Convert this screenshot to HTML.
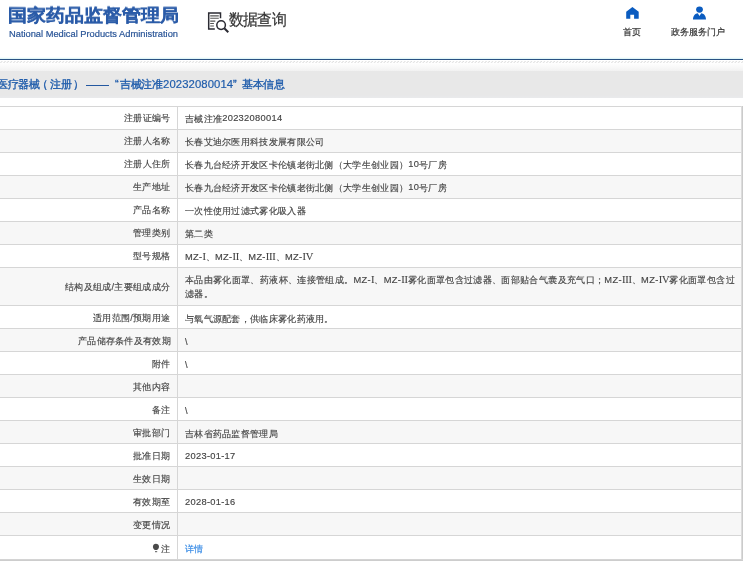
<!DOCTYPE html>
<html><head><meta charset="utf-8">
<style>
*{margin:0;padding:0;box-sizing:border-box}
html,body{width:743px;height:568px;overflow:hidden;background:#fff;font-family:"Liberation Sans",sans-serif;position:relative}
div,span,svg{position:absolute}
.logo-cn{left:8px;top:3px;font-size:19px;font-weight:bold;color:#2a5ba8;white-space:nowrap;line-height:24px;transform:scaleY(0.92);transform-origin:0 20px;-webkit-text-stroke:0.3px #2a5ba8}
.logo-en{left:9px;top:27.8px;font-size:9.3px;color:#2a5597;white-space:nowrap;line-height:12px;-webkit-text-stroke:0.2px #2a5597}
.dq{left:229px;top:9px;font-size:15px;letter-spacing:-0.8px;color:#333;white-space:nowrap;line-height:20px;transform:scaleY(1.07);transform-origin:0 0;-webkit-text-stroke:0.2px #333}
.dqi{left:204px;top:8px}
.nav1{left:622px;top:3px}
.nav1t{left:623px;top:24.5px;font-size:9px;color:#333;white-space:nowrap;line-height:14px;-webkit-text-stroke:0.2px #333}
.nav2{left:689px;top:3px}
.nav2t{left:671px;top:24.5px;font-size:9px;color:#333;white-space:nowrap;line-height:14px;-webkit-text-stroke:0.2px #333}
.bl{left:0;top:57px;width:743px;height:1px;background:#f6fdfd}
.bl1{left:0;top:58px;width:743px;height:1px;background:#e2f6f8}
.bl2{left:0;top:59px;width:743px;height:1px;background:#2a5283}
.hatch{left:0;top:61px;width:743px;height:2px}
.grad{left:0;top:63px;width:743px;height:8px;background:linear-gradient(#fff,#f2f2f2)}
.band{left:0;top:71px;width:743px;height:27px;background:linear-gradient(#e8e8e8 0,#e8e8e8 24px,#e9eaec 27px)}
.tt{top:77px;font-size:10.75px;color:#1f5cab;white-space:nowrap;line-height:14px;letter-spacing:-0.35px;-webkit-text-stroke:0.35px #1f5cab}
.dg{letter-spacing:0.1px;font-size:11.3px;-webkit-text-stroke:0.2px #1f5cab;top:76.5px}
.dash{left:85.5px;top:85px;width:23.5px;height:1px;background:#2458a0}
.row{left:0;width:743px}
.lab{right:572.5px;top:0;bottom:0;display:flex;align-items:center;font-size:9.3px;letter-spacing:0.3px;color:#444;white-space:nowrap;padding-top:2px;-webkit-text-stroke:0.15px #444;will-change:transform}
.val{left:185px;right:0;top:0;bottom:0;display:flex;align-items:center;font-size:9.3px;letter-spacing:0.3px;color:#444;line-height:14px;padding-top:2px;white-space:nowrap;-webkit-text-stroke:0.15px #444;will-change:transform}
.hl{left:0;width:743px;height:1px;background:#d6d6d6}
.vl{left:177px;top:106px;width:1px;height:453px;background:#d6d6d6}
.rb{left:741px;top:106px;width:2px;height:455px;background:linear-gradient(90deg,#dcdcdc 0,#dcdcdc 1px,#cbcbcb 1px)}
.bb{left:0;top:559px;width:743px;height:2px;background:linear-gradient(#d4d4d4 0,#d4d4d4 1px,#cdcdcd 1px)}
.link{position:static;color:#3b8de6;-webkit-text-stroke:0.2px #3b8de6}
.pin{position:relative;display:inline-block;width:7px;height:8px;margin-right:1px}

.logo-cn,.logo-en,.dq,.nav1t,.nav2t,.tt{will-change:transform}
.rn{position:static;font-family:"Liberation Serif",serif;font-size:10.5px;letter-spacing:-0.2px;-webkit-text-stroke:0.1px #444}
.d{position:relative;top:-0.7px}
.d .rn{position:static}

</style></head><body>
<div class="logo-cn">国家药品监督管理局</div>
<div class="logo-en">National Medical Products Administration</div>
<svg class="dqi" width="28" height="28" viewBox="0 0 28 28">
  <path d="M10.8 20.9H4.7V4.9H16.5V10.3" fill="none" stroke="#2b2b33" stroke-width="1.5"/>
  <path d="M6.2 7.9h8.6M6.2 10.3h8.6M6.2 13.1h5.1M6.2 15.5h3.7M6.2 18h3.7" stroke="#555" stroke-width="1.1"/>
  <circle cx="17.1" cy="17.1" r="4.3" fill="none" stroke="#2b2b33" stroke-width="1.5"/>
  <path d="M20.3 20.3L24.3 24.3" stroke="#2b2b33" stroke-width="2"/>
</svg>
<div class="dq">数据查询</div>
<svg class="nav1" width="22" height="20" viewBox="0 0 22 20">
  <path d="M10.4 3.9L16.7 8.8V15.7H12.1V11.8H8.3V15.7H4.2V8.8Z" fill="#0b5cc0"/>
</svg>
<div class="nav1t">首页</div>
<svg class="nav2" width="22" height="20" viewBox="0 0 22 20">
  <ellipse cx="10.5" cy="6.6" rx="3.4" ry="3.1" fill="#0b5cc0"/>
  <path d="M4 16.5C4 12.6 6.3 10.4 8.8 10.2L10.5 13L12.2 10.2C14.7 10.4 17 12.6 17 16.5Z" fill="#0b5cc0"/>
</svg>
<div class="nav2t">政务服务门户</div>
<div class="bl"></div><div class="bl1"></div><div class="bl2"></div>
<svg class="hatch" width="743" height="2"><defs><pattern id="hp" patternUnits="userSpaceOnUse" width="3.25" height="2"><path d="M0.3 2L2.3 0" stroke="#d9d9d9" stroke-width="0.9"/></pattern></defs><rect width="743" height="2" fill="url(#hp)"/></svg>
<div class="grad"></div>
<div class="band"></div>
<div class="tt" style="left:-3.2px">医疗器械</div>
<div class="tt" style="left:37px">（</div>
<div class="tt" style="left:49.5px">注册</div>
<div class="tt" style="left:73px">）</div>
<div class="dash"></div>
<div class="tt" style="left:114.5px">“</div>
<div class="tt" style="left:119.5px">吉械注准</div>
<div class="tt dg" style="left:162.5px">20232080014</div>
<div class="tt" style="left:232.5px">”</div>
<div class="tt" style="left:241.5px">基本信息</div>

<div class="row" style="top:106px;height:23px;background:#fff"><div class="lab"><p>注册证编号</p></div><div class="val"><p>吉械注准<span class=d>20232080014</span></p></div></div>
<div class="row" style="top:129px;height:23px;background:#f7f7f7"><div class="lab"><p>注册人名称</p></div><div class="val"><p>长春艾迪尔医用科技发展有限公司</p></div></div>
<div class="row" style="top:152px;height:23px;background:#fff"><div class="lab"><p>注册人住所</p></div><div class="val"><p>长春九台经济开发区卡伦镇老街北侧（大学生创业园）<span class=d>10</span>号厂房</p></div></div>
<div class="row" style="top:175px;height:23px;background:#f7f7f7"><div class="lab"><p>生产地址</p></div><div class="val"><p>长春九台经济开发区卡伦镇老街北侧（大学生创业园）<span class=d>10</span>号厂房</p></div></div>
<div class="row" style="top:198px;height:23px;background:#fff"><div class="lab"><p>产品名称</p></div><div class="val"><p>一次性使用过滤式雾化吸入器</p></div></div>
<div class="row" style="top:221px;height:23px;background:#f7f7f7"><div class="lab"><p>管理类别</p></div><div class="val"><p>第二类</p></div></div>
<div class="row" style="top:244px;height:23px;background:#fff"><div class="lab"><p>型号规格</p></div><div class="val"><p>MZ-<span class=rn>I</span>、MZ-<span class=rn>II</span>、MZ-<span class=rn>III</span>、MZ-<span class=rn>IV</span></p></div></div>
<div class="row" style="top:267px;height:38px;background:#f7f7f7"><div class="lab"><p>结构及组成/主要组成成分</p></div><div class="val" style="letter-spacing:0.355px"><p>本品由雾化面罩、药液杯、连接管组成。MZ-<span class=rn>I</span>、MZ-<span class=rn>II</span>雾化面罩包含过滤器、面部贴合气囊及充气口；MZ-<span class=rn>III</span>、MZ-<span class=rn>IV</span>雾化面罩包含过<br>滤器。</p></div></div>
<div class="row" style="top:305px;height:23px;background:#fff"><div class="lab" style="padding-top:4px"><p>适用范围/预期用途</p></div><div class="val" style="padding-top:4px"><p>与氧气源配套，供临床雾化药液用。</p></div></div>
<div class="row" style="top:328px;height:23px;background:#f7f7f7"><div class="lab" style="padding-top:4px"><p>产品储存条件及有效期</p></div><div class="val" style="padding-top:4px"><p>\</p></div></div>
<div class="row" style="top:351px;height:23px;background:#fff"><div class="lab" style="padding-top:4px"><p>附件</p></div><div class="val" style="padding-top:4px"><p>\</p></div></div>
<div class="row" style="top:374px;height:23px;background:#f7f7f7"><div class="lab" style="padding-top:4px"><p>其他内容</p></div><div class="val" style="padding-top:4px"><p></p></div></div>
<div class="row" style="top:397px;height:23px;background:#fff"><div class="lab" style="padding-top:4px"><p>备注</p></div><div class="val" style="padding-top:4px"><p>\</p></div></div>
<div class="row" style="top:420px;height:23px;background:#f7f7f7"><div class="lab" style="padding-top:4px"><p>审批部门</p></div><div class="val" style="padding-top:4px"><p>吉林省药品监督管理局</p></div></div>
<div class="row" style="top:443px;height:23px;background:#fff"><div class="lab" style="padding-top:4px"><p>批准日期</p></div><div class="val" style="padding-top:4px"><p><span class=d>2023-01-17</span></p></div></div>
<div class="row" style="top:466px;height:23px;background:#f7f7f7"><div class="lab" style="padding-top:4px"><p>生效日期</p></div><div class="val" style="padding-top:4px"><p></p></div></div>
<div class="row" style="top:489px;height:23px;background:#fff"><div class="lab" style="padding-top:4px"><p>有效期至</p></div><div class="val" style="padding-top:4px"><p><span class=d>2028-01-16</span></p></div></div>
<div class="row" style="top:512px;height:23px;background:#f7f7f7"><div class="lab" style="padding-top:4px"><p>变更情况</p></div><div class="val" style="padding-top:4px"><p></p></div></div>
<div class="row" style="top:535px;height:24px;background:#fff"><div class="lab" style="padding-top:4px"><p>注</p></div><div class="val" style="padding-top:4px"><p><span class="link">详情</span></p></div></div>
<div class="hl" style="top:106px"></div><div class="hl" style="top:129px"></div><div class="hl" style="top:152px"></div><div class="hl" style="top:175px"></div><div class="hl" style="top:198px"></div><div class="hl" style="top:221px"></div><div class="hl" style="top:244px"></div><div class="hl" style="top:267px"></div><div class="hl" style="top:305px"></div><div class="hl" style="top:328px"></div><div class="hl" style="top:351px"></div><div class="hl" style="top:374px"></div><div class="hl" style="top:397px"></div><div class="hl" style="top:420px"></div><div class="hl" style="top:443px"></div><div class="hl" style="top:466px"></div><div class="hl" style="top:489px"></div><div class="hl" style="top:512px"></div><div class="hl" style="top:535px"></div>
<div class="vl"></div><div class="rb"></div><div class="bb"></div>
<svg style="left:150px;top:540px" width="12" height="14" viewBox="0 0 12 14"><path d="M5.9 3.8C7.7 3.8 9 5 9 6.8C9 8.3 8 9.3 6.9 10.1H4.9C3.8 9.3 2.9 8.3 2.9 6.8C2.9 5 4.2 3.8 5.9 3.8Z" fill="#4a4a4a"/><path d="M5 11.7H7.2" stroke="#555" stroke-width="1"/></svg>

</body></html>
